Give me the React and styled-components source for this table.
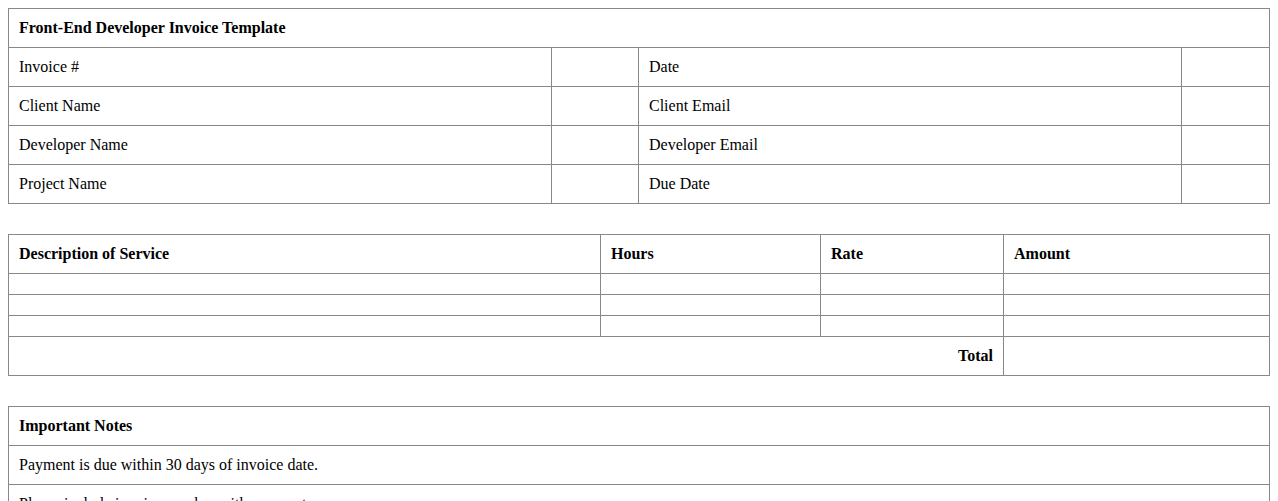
import React from "react";
import styled, { createGlobalStyle } from "styled-components";

const GlobalStyle = createGlobalStyle`
  html, body { background: #ffffff; }
  body {
    margin: 8px;
    font-family: "Liberation Serif", "Times New Roman", serif;
    font-size: 16px;
    color: #000000;
  }
`;

const Sheet = styled.main`
  display: flex;
  flex-direction: column;
  gap: 30px;
`;

const Table = styled.table`
  width: 100%;
  border-collapse: collapse;
  table-layout: fixed;
  font-family: "Liberation Serif", "Times New Roman", serif;
  font-size: 16px;
`;

const Col = styled.col`
  width: ${(p) => p.$w};
`;

const Cell = styled.td`
  border: 1px solid #888888;
  padding: 10px;
  text-align: ${(p) => (p.$right ? "right" : "left")};
  font-weight: ${(p) => (p.$bold ? "bold" : "normal")};
  vertical-align: middle;
  line-height: normal;
`;

const HeadCell = styled(Cell).attrs({ as: "th" })``;

const infoRows = [
  ["Invoice #", "Date"],
  ["Client Name", "Client Email"],
  ["Developer Name", "Developer Email"],
  ["Project Name", "Due Date"],
];

export default function App() {
  return (
    <>
      <GlobalStyle />
      <Sheet>
        <Table>
          <colgroup>
            <Col $w="543px" />
            <Col $w="87px" />
            <Col $w="543px" />
            <Col $w="auto" />
          </colgroup>
          <tbody>
            <tr>
              <HeadCell colSpan={4} $bold>
                Front-End Developer Invoice Template
              </HeadCell>
            </tr>
            {infoRows.map(([a, b]) => (
              <tr key={a}>
                <Cell>{a}</Cell>
                <Cell />
                <Cell>{b}</Cell>
                <Cell />
              </tr>
            ))}
          </tbody>
        </Table>

        <Table>
          <colgroup>
            <Col $w="592px" />
            <Col $w="220px" />
            <Col $w="183px" />
            <Col $w="auto" />
          </colgroup>
          <tbody>
            <tr>
              <HeadCell $bold>Description of Service</HeadCell>
              <HeadCell $bold>Hours</HeadCell>
              <HeadCell $bold>Rate</HeadCell>
              <HeadCell $bold>Amount</HeadCell>
            </tr>
            {[0, 1, 2].map((i) => (
              <tr key={i}>
                <Cell />
                <Cell />
                <Cell />
                <Cell />
              </tr>
            ))}
            <tr>
              <HeadCell colSpan={3} $bold $right>
                Total
              </HeadCell>
              <Cell />
            </tr>
          </tbody>
        </Table>

        <Table>
          <tbody>
            <tr>
              <HeadCell $bold>Important Notes</HeadCell>
            </tr>
            <tr>
              <Cell>Payment is due within 30 days of invoice date.</Cell>
            </tr>
            <tr>
              <Cell>Please include invoice number with payment.</Cell>
            </tr>
          </tbody>
        </Table>
      </Sheet>
    </>
  );
}
